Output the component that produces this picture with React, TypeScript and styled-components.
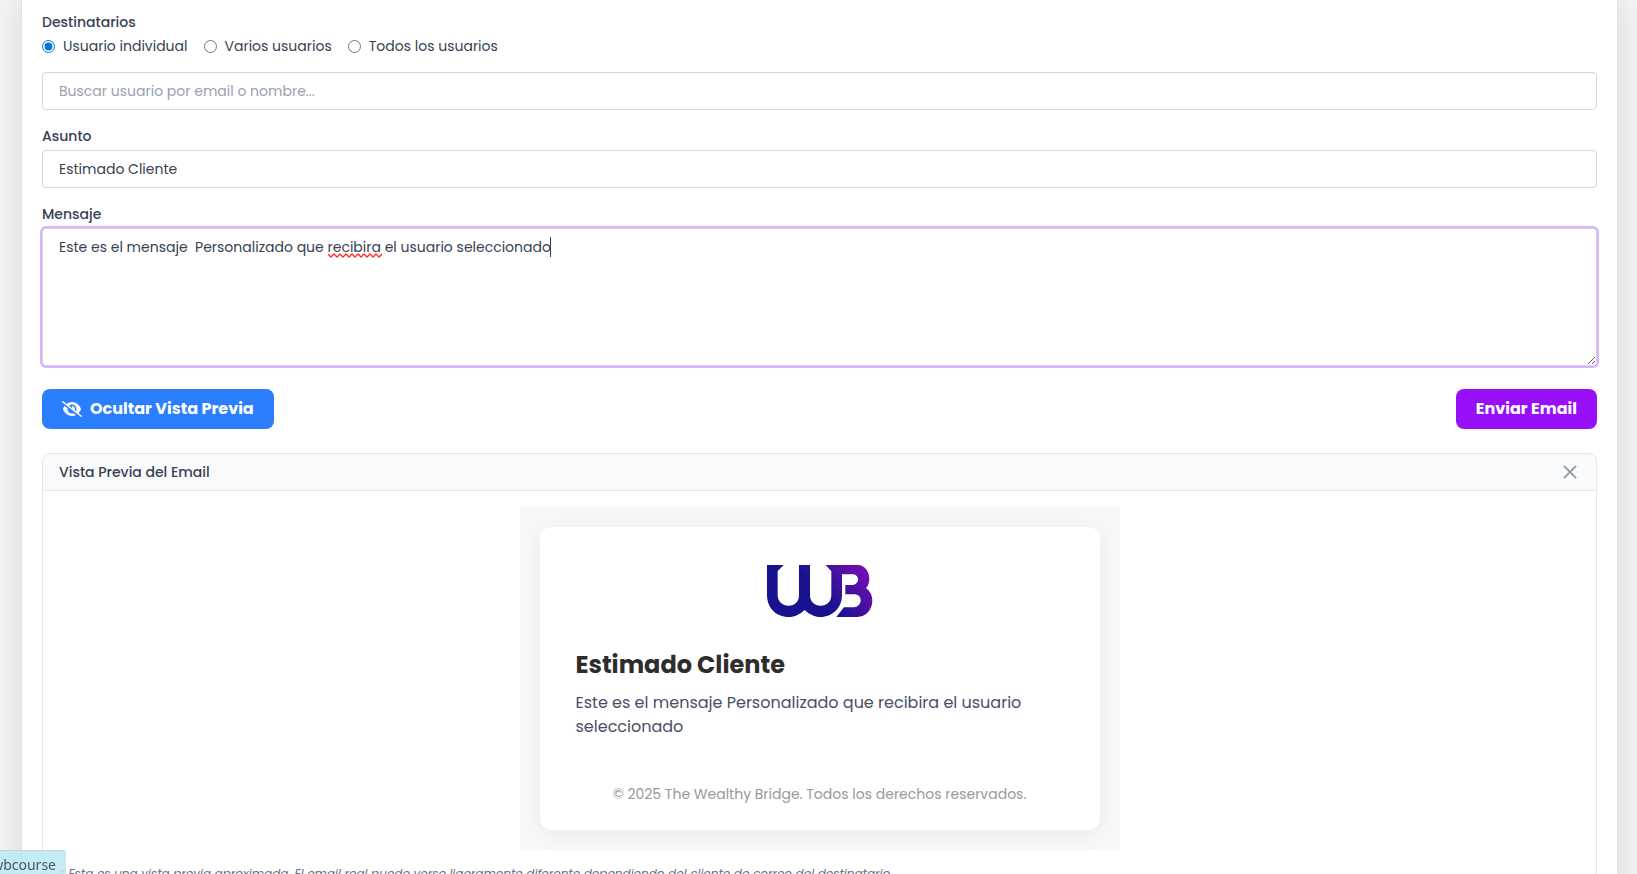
import React, { useState } from 'react';
import styled, { createGlobalStyle } from 'styled-components';
import { FaEyeSlash } from 'react-icons/fa6';

const GlobalStyle = createGlobalStyle`
  *, *::before, *::after { box-sizing: border-box; }
  body {
    margin: 0;
    background: #f3f3f3;
    color: #364153;
    font-family: Poppins, Inter, sans-serif;
    font-size: 14px;
    line-height: 20px;
  }
  button, input, textarea { font: inherit; color: inherit; }
`;

const Page = styled.div`
  height: 100vh;
  overflow: hidden;
  padding: 0 19px 0 21px;
`;

const Card = styled.main`
  min-height: 100vh;
  padding: 12px 20px 20px;
  background: #fff;
  border: solid #e2e2e2;
  border-width: 0 1px;
  box-shadow: 0 0 30px rgba(0, 0, 0, 0.1);
`;

const Form = styled.form`
  display: flex;
  flex-direction: column;
  gap: 16px;
`;

const Field = styled.div`
  display: flex;
  flex-direction: column;
  gap: 4px;
`;

const Label = styled.label`
  font-weight: 500;
`;

const RadioGroup = styled.fieldset`
  margin: 0;
  padding: 0;
  border: 0;
  min-width: 0;
`;

const Legend = styled.legend`
  margin-bottom: 4px;
  padding: 0;
  font-weight: 500;
`;

const RadioRow = styled.div`
  display: flex;
  gap: 16px;
`;

const RadioLabel = styled.label`
  display: flex;
  align-items: center;
  gap: 8px;
`;

const Radio = styled.input.attrs({ type: 'radio' })`
  width: 13px;
  height: 13px;
  margin: 0;
  accent-color: #0078d7;
`;

const TextInput = styled.input`
  width: 100%;
  height: 38px;
  padding: 8px 16px;
  background: #fff;
  border: 1px solid #d1d5dc;
  border-radius: 4px;
  outline: none;
  &::placeholder { color: #99a1af; opacity: 1; }
`;

const MessageBox = styled.div`
  position: relative;
  display: flex;
`;

const TextArea = styled.textarea`
  width: 100%;
  height: 138px;
  padding: 8px 16px;
  background: #fff;
  border: 1px solid #d1d5dc;
  border-radius: 4px;
  box-shadow: 0 0 0 2px #dab2ff;
  outline: none;
  resize: vertical;
`;

const Squiggle = styled.svg`
  position: absolute;
  top: 25px;
  left: 286px;
  width: 54px;
  height: 5px;
  pointer-events: none;
`;

const Caret = styled.span`
  position: absolute;
  top: 9px;
  left: 508px;
  width: 1px;
  height: 20px;
  background: #364153;
  pointer-events: none;
`;

const Actions = styled.div`
  display: flex;
  justify-content: space-between;
  margin-top: 7px;
`;

const ActionButton = styled.button<{ $color: string }>`
  display: flex;
  align-items: center;
  gap: 8px;
  height: 40px;
  padding: 0 20px;
  border: 0;
  border-radius: 8px;
  background: ${(p) => p.$color};
  color: #fff;
  font-size: 16px;
  font-weight: 700;
  cursor: pointer;
`;

const Preview = styled.section`
  margin-top: 24px;
  border: 1px solid #e5e7eb;
  border-radius: 8px;
  overflow: hidden;
`;

const PreviewHeader = styled.header`
  display: flex;
  align-items: center;
  justify-content: space-between;
  padding: 8px 16px;
  background: #f9fafb;
  border-bottom: 1px solid #e5e7eb;
`;

const PreviewTitle = styled.h3`
  margin: 0;
  font-size: 14px;
  font-weight: 500;
`;

const CloseButton = styled.button`
  display: flex;
  padding: 0;
  border: 0;
  background: none;
  color: #99a1af;
  cursor: pointer;
`;

const PreviewBody = styled.div`
  padding: 16px;
`;

const EmailBackdrop = styled.div`
  max-width: 600px;
  margin: 0 auto;
  padding: 20px;
  background: #f6f8fa;
`;

const EmailCard = styled.article`
  padding: 38px 36px 26px;
  background: #fff;
  border-radius: 12px;
  box-shadow: 0 4px 24px rgba(0, 0, 0, 0.06);
`;

const Logo = styled.svg`
  display: block;
  width: 106px;
  height: 52px;
  margin: 0 auto;
`;

const EmailTitle = styled.h2`
  margin: 30px 0 8px;
  color: #2d2d2d;
  font-size: 24px;
  line-height: 36px;
  font-weight: 700;
`;

const EmailText = styled.p`
  margin: 0;
  color: #4a4e69;
  font-size: 16px;
  line-height: 24px;
`;

const EmailFooter = styled.footer`
  margin-top: 45px;
  color: #999;
  text-align: center;
`;

const Note = styled.p`
  margin: 14px 0 0;
  color: #6a7282;
  font-size: 12px;
  font-style: italic;
`;

const StatusLink = styled.a`
  position: fixed;
  left: 0;
  bottom: 0;
  width: 66px;
  height: 24px;
  padding: 4px 10px 0 0;
  display: flex;
  justify-content: flex-end;
  overflow: hidden;
  background: rgba(190, 234, 244, 0.9);
  border-top: 1px solid #c3d5da;
  border-top-right-radius: 4px;
  color: #4a5560;
  font-family: 'Noto Sans', sans-serif;
  font-size: 14px;
  text-decoration: none;
`;

const AUDIENCES = ['Usuario individual', 'Varios usuarios', 'Todos los usuarios'];

export default function App() {
  const [audience, setAudience] = useState(AUDIENCES[0]);
  const [subject, setSubject] = useState('Estimado Cliente');
  const [message, setMessage] = useState(
    'Este es el mensaje  Personalizado que recibira el usuario seleccionado',
  );

  return (
    <>
      <GlobalStyle />
      <Page>
        <Card>
          <Form onSubmit={(e) => e.preventDefault()}>
            <RadioGroup>
              <Legend>Destinatarios</Legend>
              <RadioRow>
                {AUDIENCES.map((name) => (
                  <RadioLabel key={name}>
                    <Radio
                      name="audience"
                      checked={audience === name}
                      onChange={() => setAudience(name)}
                    />
                    {name}
                  </RadioLabel>
                ))}
              </RadioRow>
            </RadioGroup>
            <TextInput aria-label="Buscar usuario" placeholder="Buscar usuario por email o nombre..." />
            <Field>
              <Label htmlFor="subject">Asunto</Label>
              <TextInput id="subject" value={subject} onChange={(e) => setSubject(e.target.value)} />
            </Field>
            <Field>
              <Label htmlFor="message">Mensaje</Label>
              <MessageBox>
                <TextArea
                  id="message"
                  spellCheck={false}
                  value={message}
                  onChange={(e) => setMessage(e.target.value)}
                />
                <Squiggle viewBox="0 0 54 5" aria-hidden="true">
                  <path
                    d="M0 1L3 4L6 1L9 4L12 1L15 4L18 1L21 4L24 1L27 4L30 1L33 4L36 1L39 4L42 1L45 4L48 1L51 4L54 1"
                    fill="none"
                    stroke="#ff2a2a"
                    strokeWidth="1.3"
                  />
                </Squiggle>
                <Caret />
              </MessageBox>
            </Field>
            <Actions>
              <ActionButton type="button" $color="#2b7fff">
                <FaEyeSlash size={20} />
                Ocultar Vista Previa
              </ActionButton>
              <ActionButton type="submit" $color="#9810fa">
                Enviar Email
              </ActionButton>
            </Actions>
          </Form>
          <Preview>
            <PreviewHeader>
              <PreviewTitle>Vista Previa del Email</PreviewTitle>
              <CloseButton type="button" aria-label="Cerrar">
                <svg width="20" height="20" viewBox="0 0 20 20" aria-hidden="true">
                  <path d="M4.5 4.5L15.5 15.5M15.5 4.5L4.5 15.5" stroke="currentColor" strokeWidth="2" strokeLinecap="round" />
                </svg>
              </CloseButton>
            </PreviewHeader>
            <PreviewBody>
              <EmailBackdrop>
                <EmailCard>
                  <Logo viewBox="10 15 318 156" role="img" aria-label="The Wealthy Bridge">
                    <defs>
                      <linearGradient id="brand" gradientUnits="userSpaceOnUse" x1="185" y1="120" x2="300" y2="20">
                        <stop offset="0" stopColor="#18128f" />
                        <stop offset="1" stopColor="#760eb4" />
                      </linearGradient>
                    </defs>
                    <path
                      fill="url(#brand)"
                      d="M10 15H60L42 33V105C42 125 56 137 75 137S106 125 106 105V15H139V105C139 125 152 137 171 137S203 125 203 105V34L186 15H283C303 15 317 35 317 56C317 68 314 77 307 84C319 93 326 107 326 121C326 150 306 171 281 171H218L241 142H270C282 142 291 133 291 121S282 103 271 103H245V75H266C276 75 283 67 283 58S276 43 266 43H235V105C235 145 205 171 171 171C152 171 137 163 123 150C109 163 94 171 75 171C37 171 10 143 10 105Z"
                    />
                  </Logo>
                  <EmailTitle>{subject}</EmailTitle>
                  <EmailText>{message}</EmailText>
                  <EmailFooter>© 2025 The Wealthy Bridge. Todos los derechos reservados.</EmailFooter>
                </EmailCard>
              </EmailBackdrop>
              <Note>
                * Esta es una vista previa aproximada. El email real puede verse ligeramente diferente
                dependiendo del cliente de correo del destinatario.
              </Note>
            </PreviewBody>
          </Preview>
        </Card>
      </Page>
      <StatusLink href="#wbcourse">/wbcourse</StatusLink>
    </>
  );
}
